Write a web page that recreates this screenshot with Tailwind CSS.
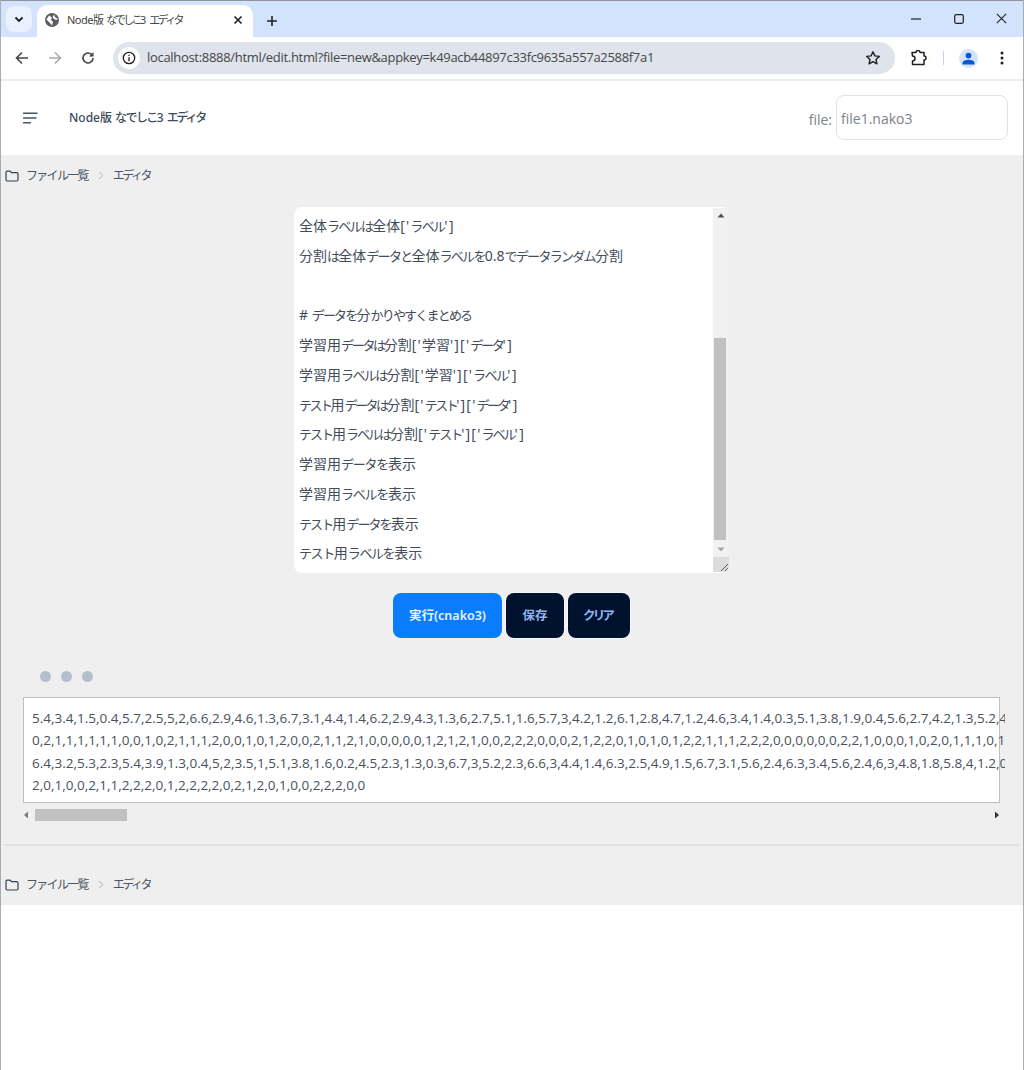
<!DOCTYPE html>
<html lang="ja">
<head>
<meta charset="utf-8">
<title>Node版 なでしこ3 エディタ</title>
<script src="https://cdn.jsdelivr.net/npm/@tailwindcss/browser@4"></script>
</head>
<body class="m-0 bg-white overflow-hidden">
<div class="w-[1024px] h-[1070px] overflow-hidden flex flex-col bg-white border-x border-[#a9acb0] font-['Noto_Sans','Noto_Sans_CJK_JP',sans-serif]">
  <!-- tab strip -->
  <div class="h-[37px] shrink-0 bg-[#d3e3fd] border-t border-[#8f939a] flex items-end pl-[5px]">
    <div class="w-[26px] h-[26px] mb-[5px] rounded-lg bg-[#e9f0fe] flex items-center justify-center">
      <svg width="10" height="7" viewBox="0 0 10 7"><path d="M1.5 1.5 5 5l3.5-3.5" fill="none" stroke="#1f1f1f" stroke-width="1.8"/></svg>
    </div>
    <div class="ml-[5px] w-[216px] h-[32px] bg-white rounded-t-[10px] flex items-center pl-[8px] pr-[10px] text-[11px] text-[#444746] pb-[2px]">
      <svg width="14" height="14" viewBox="0 0 14 14" class="shrink-0"><circle cx="7" cy="7" r="7" fill="#5b5f63"/><path d="M4 2.500 7 4.500 6 7 8 9 7 12.500 5 10 1.500 6.500ZM9.500 1.800l.3 2.200 2.400 1.500.8 1-2.500.3-2-1.300-.8-2Z" fill="#fff"/></svg>
      <span class="ml-[8px] whitespace-nowrap"><span class="tracking-[-0.5px]">Node版</span> <span class="tracking-[-2.6px]">なでしこ</span>3 <span class="tracking-[-2.6px]">エディタ</span></span>
      <svg width="10" height="10" viewBox="0 0 10 10" class="ml-auto shrink-0"><path d="M1.5 1.5l7 7m0-7-7 7" stroke="#1f1f1f" stroke-width="1.6" fill="none"/></svg>
    </div>
    <svg width="12" height="12" viewBox="0 0 12 12" class="ml-[13px] mb-[10px]"><path d="M6 1v10M1 6h10" stroke="#1f1f1f" stroke-width="1.6" fill="none"/></svg>
    <div class="ml-auto flex items-center h-full pb-[1px]">
      <svg width="10" height="10" viewBox="0 0 10 10" class="mr-[33px]"><path d="M0 5h10" stroke="#1f1f1f" stroke-width="1.2"/></svg>
      <svg width="10" height="10" viewBox="0 0 10 10" class="mr-[32px]"><rect x=".7" y=".7" width="8.6" height="8.6" rx="1.500" fill="none" stroke="#1f1f1f" stroke-width="1.2"/></svg>
      <svg width="11" height="11" viewBox="0 0 11 11" class="mr-[16px]"><path d="M.8.8l9.400 9.400m0-9.400L.8 10.200" stroke="#1f1f1f" stroke-width="1.1" fill="none"/></svg>
    </div>
  </div>
  <!-- toolbar -->
  <div class="h-[44px] shrink-0 bg-white flex items-center pl-[14px] border-b-2 border-[#eaedf1]">
    <svg width="14" height="14" viewBox="0 0 14 14"><path d="M13 7H2M7 1.500 1.500 7 7 12.500" fill="none" stroke="#444746" stroke-width="1.6"/></svg>
    <svg width="14" height="14" viewBox="0 0 14 14" class="ml-[19px]"><path d="M1 7h11M7 1.500 12.500 7 7 12.500" fill="none" stroke="#a7aaad" stroke-width="1.6"/></svg>
    <svg width="14" height="14" viewBox="0 0 14 14" class="ml-[19px]"><path d="M12 7a5 5 0 1 1-1.500-3.600L12 5" fill="none" stroke="#444746" stroke-width="1.6"/><path d="M12.500 1v4.500H8z" fill="#444746"/></svg>
    <div class="ml-[18px] w-[782px] h-[32px] rounded-full bg-[#dfe3eb] flex items-center pl-[5px] pr-[14px]">
      <div class="w-[22px] h-[22px] rounded-full bg-white flex items-center justify-center shrink-0">
        <svg width="14" height="14" viewBox="0 0 14 14"><circle cx="7" cy="7" r="5.7" fill="none" stroke="#1f1f1f" stroke-width="1.3"/><path d="M7 6.300v4M7 3.700v1.400" stroke="#1f1f1f" stroke-width="1.3"/></svg>
      </div>
      <span class="ml-[7px] text-[13px] text-[#444746] whitespace-nowrap font-['Open_Sans',sans-serif] tracking-[-0.31px]">localhost:8888/html/edit.html?file=new&amp;appkey=k49acb44897c33fc9635a557a2588f7a1</span>
      <svg width="16" height="16" viewBox="0 0 16 16" class="ml-auto"><path d="M8 1.800l1.900 4.100 4.400.5-3.300 3 .9 4.400L8 11.600l-3.900 2.200.9-4.400-3.300-3 4.400-.5z" fill="none" stroke="#1f1f1f" stroke-width="1.4" stroke-linejoin="round"/></svg>
    </div>
    <svg width="16" height="16" viewBox="0 0 16 16" class="ml-[16px]"><path d="M1 2.500h4a2 2 0 0 1 4 0h4v3.500a2 2 0 0 1 0 4v4.500H1.500v-3.500a2.500 2.500 0 0 0 0-5z" fill="none" stroke="#1f1f1f" stroke-width="1.5" stroke-linejoin="round"/></svg>
    <div class="ml-[16px] w-px h-[14px] bg-[#c2d4f2]"></div>
    <div class="ml-[15px] w-[19px] h-[19px] rounded-full bg-[#d3e3fd] flex items-center justify-center">
      <svg width="13" height="13" viewBox="0 0 13 13"><circle cx="6.500" cy="3.600" r="2.900" fill="#0b57d0"/><path d="M.5 12.500V10.800c0-1.700 3.400-3 6-3s6 1.300 6 3v1.700z" fill="#0b57d0"/></svg>
    </div>
    <svg width="4" height="14" viewBox="0 0 4 14" class="ml-[22px]"><circle cx="2" cy="2" r="1.500" fill="#1f1f1f"/><circle cx="2" cy="7" r="1.500" fill="#1f1f1f"/><circle cx="2" cy="12" r="1.500" fill="#1f1f1f"/></svg>
  </div>
  <!-- app header -->
  <header class="h-[74px] shrink-0 bg-white flex items-center pl-[22px] pr-[15px]">
    <svg width="16" height="12" viewBox="0 0 16 12" class="shrink-0"><path d="M.5 1.200h13.500M.5 6h12.500M.5 10.800h7" stroke="#475569" stroke-width="1.500" stroke-linecap="round" fill="none"/></svg>
    <span class="ml-[30px] text-[12px] font-medium text-[#3d4a5c] whitespace-nowrap">Node版 <span class="tracking-[-1.6px]">なでしこ</span>3 <span class="tracking-[-2.2px]">エディタ</span></span>
    <span class="ml-auto text-[14px] text-[#7d8288] mr-[4px] pt-[2px] font-['Open_Sans',sans-serif]">file:</span>
    <div class="w-[172px] h-[45px] mb-[2px] rounded-lg border border-[#dfe2e6] bg-white flex items-center pl-[4px] pt-[2px] text-[14px] text-[#7d8288] font-['Open_Sans',sans-serif]">file1.nako3</div>
  </header>
  <!-- main -->
  <main class="h-[750px] shrink-0 bg-[#efefef] flex flex-col">
    <nav class="h-[40px] pt-[1px] shrink-0 flex items-center pl-[4px] text-[12px] text-[#4b5563]">
      <svg width="14" height="12" viewBox="0 0 14 12" class="shrink-0"><path d="M1 2.300c0-.7.5-1.200 1.200-1.200h2.900l1.300 1.500h5.400c.7 0 1.200.5 1.200 1.200v6c0 .7-.5 1.200-1.200 1.200H2.200c-.7 0-1.200-.5-1.200-1.200z" fill="none" stroke="#334155" stroke-width="1.200"/></svg>
      <span class="ml-[7px] tracking-[-1.7px]">ファイル一覧</span>
      <svg width="6" height="9" viewBox="0 0 6 9" class="ml-[10px]"><path d="M1 1l4 3.500-4 3.500" fill="none" stroke="#b4b8bd" stroke-width="1"/></svg>
      <span class="ml-[9px] tracking-[-2.5px]">エディタ</span>
    </nav>
    <section class="mt-[12px] self-start ml-[293px] w-[435px] h-[366px] bg-white rounded-lg flex overflow-hidden shrink-0">
      <div class="w-[418px] grid auto-rows-[29.75px] content-start pl-[5px] pt-[4px] text-[14px] leading-[29.75px] text-[#444c59] whitespace-nowrap overflow-hidden">
        <div>全体<span class="text-[13px] tracking-[-1.7px]">ラベルは</span>全体<span class="tracking-[1.2px]">['</span><span class="text-[13px] tracking-[-1.7px]">ラベル</span><span class="tracking-[1.6px]">']</span></div>
        <div>分割<span class="text-[13px] tracking-[-1.7px]">は</span>全体<span class="text-[13px] tracking-[-1.7px]">データと</span>全体<span class="text-[13px] tracking-[-1.7px]">ラベルを</span>0.8<span class="text-[13px] tracking-[-1.7px]">でデータランダム</span>分割</div>
        <div></div>
        <div># <span class="text-[13px] tracking-[-1.8px]">データを</span>分<span class="text-[13px] tracking-[-1.8px]">かりやすくまとめる</span></div>
        <div>学習用<span class="text-[13px] tracking-[-2.3px]">データは</span>分割<span class="tracking-[1.2px]">['</span>学習<span class="tracking-[1.2px]">']['</span><span class="text-[13px] tracking-[-2.3px]">データ</span><span class="tracking-[1.6px]">']</span></div>
        <div>学習用<span class="text-[13px] tracking-[-1.6px]">ラベルは</span>分割<span class="tracking-[1.2px]">['</span>学習<span class="tracking-[1.2px]">']['</span><span class="text-[13px] tracking-[-1.6px]">ラベル</span><span class="tracking-[1.6px]">']</span></div>
        <div><span class="text-[13px] tracking-[-2.5px]">テスト</span>用<span class="text-[13px] tracking-[-2.5px]">データは</span>分割<span class="tracking-[1.2px]">['</span><span class="text-[13px] tracking-[-2.5px]">テスト</span><span class="tracking-[1.2px]">']['</span><span class="text-[13px] tracking-[-2.5px]">データ</span><span class="tracking-[1.6px]">']</span></div>
        <div><span class="text-[13px] tracking-[-2px]">テスト</span>用<span class="text-[13px] tracking-[-2px]">ラベルは</span>分割<span class="tracking-[1.2px]">['</span><span class="text-[13px] tracking-[-2px]">テスト</span><span class="tracking-[1.2px]">']['</span><span class="text-[13px] tracking-[-2px]">ラベル</span><span class="tracking-[1.6px]">']</span></div>
        <div>学習用<span class="text-[13px] tracking-[-1.25px]">データを</span>表示</div>
        <div>学習用<span class="text-[13px] tracking-[-1.25px]">ラベルを</span>表示</div>
        <div><span class="text-[13px] tracking-[-1.9px]">テスト</span>用<span class="text-[13px] tracking-[-1.9px]">データを</span>表示</div>
        <div><span class="text-[13px] tracking-[-1.4px]">テスト</span>用<span class="text-[13px] tracking-[-1.4px]">ラベルを</span>表示</div>
      </div>
      <div class="w-[16px] ml-auto mt-[1px] mb-[1px] bg-[#f1f1f1] flex flex-col items-center">
        <div class="h-[15px] flex items-center justify-center"><svg width="8" height="5" viewBox="0 0 8 5"><path d="M4 .5 7.500 4.500H.5z" fill="#505050"/></svg></div>
        <div class="mt-[115px] w-[12px] h-[203px] mr-[2px] bg-[#c1c1c1]"></div>
        <div class="h-[16px] mt-[1px] flex items-center justify-center"><svg width="8" height="5" viewBox="0 0 8 5"><path d="M4 4.500.5.500h7z" fill="#a3a3a3"/></svg></div>
        <div class="w-full h-[15px] bg-[#dcdcdc] flex items-end justify-end">
          <svg width="11" height="11" viewBox="0 0 11 11"><path d="M10 3 3 10M10 7l-3 3" stroke="#5a5a5a" stroke-width="1" fill="none"/></svg>
        </div>
      </div>
    </section>
    <div class="mt-[20px] ml-[392px] flex gap-[4px] shrink-0">
      <button class="w-[109px] h-[45px] pt-[1px] rounded-lg bg-[#0a7cff] text-white/90 text-[12.5px] font-semibold">実行(cnako3)</button>
      <button class="w-[58px] h-[45px] pt-[1px] rounded-lg bg-[#01122f] ring-1 ring-[#f6f6ff] text-[#8fb4f0] text-[12.5px] font-semibold">保存</button>
      <button class="w-[62px] h-[45px] pt-[1px] pr-[3px] rounded-lg bg-[#01122f] ring-1 ring-[#f6f6ff] text-[#8fb4f0] text-[12.5px] font-semibold tracking-[-2.9px]">クリア</button>
    </div>
    <div class="mt-[33px] ml-[39px] flex gap-[10px] shrink-0">
      <span class="w-[11px] h-[11px] rounded-full bg-[#b4bfcd]"></span>
      <span class="w-[11px] h-[11px] rounded-full bg-[#b4bfcd]"></span>
      <span class="w-[11px] h-[11px] rounded-full bg-[#b4bfcd]"></span>
    </div>
    <div class="mt-[15px] ml-[22px] w-[982px] overflow-hidden shrink-0">
      <div class="w-[977px] h-[106px] bg-white border border-[#bfbfbf] pl-[8px] pt-[9px] text-[13.52px] leading-[22.4px] text-[#4a5160] whitespace-nowrap font-['Open_Sans',sans-serif]">
        <div>5.4,3.4,1.5,0.4,5.7,2.5,5,2,6.6,2.9,4.6,1.3,6.7,3.1,4.4,1.4,6.2,2.9,4.3,1.3,6,2.7,5.1,1.6,5.7,3,4.2,1.2,6.1,2.8,4.7,1.2,4.6,3.4,1.4,0.3,5.1,3.8,1.9,0.4,5.6,2.7,4.2,1.3,5.2,4</div>
        <div>0,2,1,1,1,1,1,1,0,0,1,0,2,1,1,1,2,0,0,1,0,1,2,0,0,2,1,1,2,1,0,0,0,0,0,1,2,1,2,1,0,0,2,2,2,0,0,0,2,1,2,2,0,1,0,1,0,1,2,2,1,1,1,2,2,2,0,0,0,0,0,0,2,2,1,0,0,0,1,0,2,0,1,1,1,0,1</div>
        <div>6.4,3.2,5.3,2.3,5.4,3.9,1.3,0.4,5,2,3.5,1,5.1,3.8,1.6,0.2,4.5,2.3,1.3,0.3,6.7,3,5.2,2.3,6.6,3,4.4,1.4,6.3,2.5,4.9,1.5,6.7,3.1,5.6,2.4,6.3,3.4,5.6,2.4,6,3,4.8,1.8,5.8,4,1.2,0</div>
        <div>2,0,1,0,0,2,1,1,2,2,2,0,1,2,2,2,2,0,2,1,2,0,1,0,0,2,2,2,0,0</div>
      </div>
      <div class="h-[15px] mt-[4px] flex items-center">
        <svg width="12" height="8" viewBox="0 0 12 8" class="ml-[-2px]"><path d="M3 4 7 .5v7z" fill="#7d7d7d"/></svg>
        <div class="ml-[2px] w-[92px] h-[12px] bg-[#c1c1c1]"></div>
        <svg width="8" height="8" viewBox="0 0 8 8" class="ml-auto mr-[4px]"><path d="M6 4 2 .5v7z" fill="#333"/></svg>
      </div>
    </div>
    <div class="mt-[22px] ml-[3px] w-[1015px] h-[2px] bg-[#dfe1e5] shrink-0"></div>
    <nav class="mt-[18px] h-[40px] pt-[1px] shrink-0 flex items-center pl-[4px] text-[12px] text-[#4b5563]">
      <svg width="14" height="12" viewBox="0 0 14 12" class="shrink-0"><path d="M1 2.300c0-.7.5-1.200 1.200-1.200h2.900l1.300 1.500h5.400c.7 0 1.200.5 1.200 1.200v6c0 .7-.5 1.200-1.200 1.200H2.200c-.7 0-1.200-.5-1.200-1.200z" fill="none" stroke="#334155" stroke-width="1.200"/></svg>
      <span class="ml-[7px] tracking-[-1.7px]">ファイル一覧</span>
      <svg width="6" height="9" viewBox="0 0 6 9" class="ml-[10px]"><path d="M1 1l4 3.500-4 3.500" fill="none" stroke="#b4b8bd" stroke-width="1"/></svg>
      <span class="ml-[9px] tracking-[-2.5px]">エディタ</span>
    </nav>
  </main>
</div>
</body>
</html>
